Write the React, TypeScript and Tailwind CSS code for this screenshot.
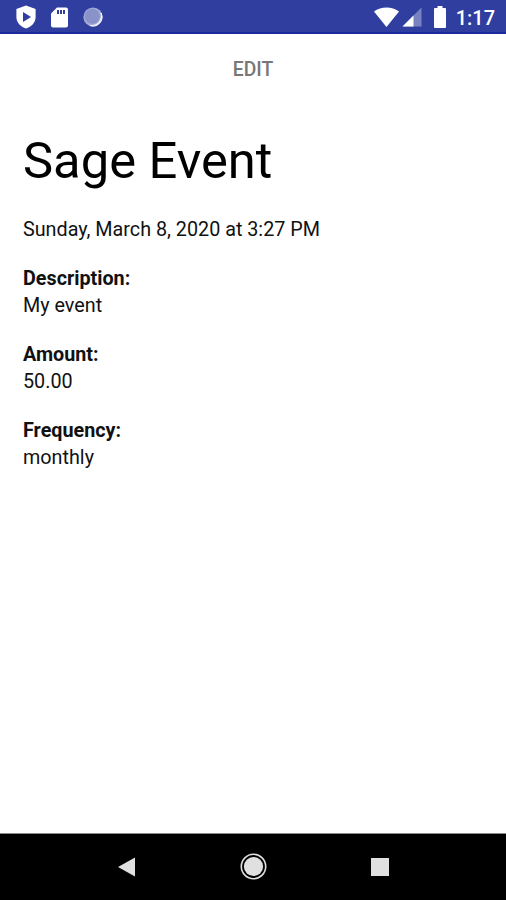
import React from "react";

const DETAILS = [
  { label: "Description:", value: "My event" },
  { label: "Amount:", value: "50.00" },
  { label: "Frequency:", value: "monthly" },
];

const StatusBar: React.FC = () => {
  return (
    <header className="flex h-[34px] shrink-0 items-center justify-between border-b-2 border-[#1d2a9c] bg-[#303f9f] pl-4 pr-[11px] pt-[2px] text-white">
      <div className="flex items-center">
        {/* Play Protect shield */}
        <svg className="h-[24px] w-[20px]" viewBox="0 0 20 24">
          <path d="M10 0.6 L19.6 4 V12 C19.6 17.5 15.5 21.8 10 23.4 C4.5 21.8 0.4 17.5 0.4 12 V4 Z" fill="#fff" />
          <path d="M7 7 L15 12 L7 17 Z" fill="#303f9f" />
        </svg>
        {/* SD card */}
        <svg className="ml-[15px] h-[21px] w-[17px]" viewBox="0 0 17 21">
          <path d="M6 0.5 H15 Q17 0.5 17 2.5 V18.5 Q17 20.5 15 20.5 H2 Q0 20.5 0 18.5 V6.5 Z" fill="#fff" />
          <path d="M6 3 H8 V7 H6 Z M9 3 H11 V7 H9 Z M12 3 H14 V7 H12 Z" fill="#303f9f" />
        </svg>
        {/* Sync spinner */}
        <svg className="ml-[15px] h-5 w-5" viewBox="0 0 20 20">
          <circle cx="10" cy="10" r="9.6" fill="#a3abd6" />
          <path d="M18 6 A9 9 0 0 1 7 18.5 A9.8 9.8 0 0 0 18 6 Z" fill="#f1f3fc" stroke="#f1f3fc" />
          <circle cx="9.3" cy="9.3" r="7.5" fill="#8992c9" />
        </svg>
      </div>
      <div className="flex items-center">
        <svg className="h-[20px] w-[25px]" viewBox="0 0 25 20">
          <path d="M0 4.5 C7 -1 18 -1 25 4.5 L12.5 20 Z" fill="#fff" />
        </svg>
        <svg className="ml-[3px] h-[20px] w-[20px]" viewBox="0 0 20 20">
          <path d="M19.5 0.5 V19.5 H0.5 Z" fill="#7882c1" />
          <path d="M11.5 8.5 V19.5 H0.5 Z" fill="#fff" />
        </svg>
        <svg className="ml-[12px] h-[22px] w-[12px]" viewBox="0 0 12 22">
          <path d="M3.5 0 H8.5 V2 H11 Q12 2 12 3 V21 Q12 22 11 22 H1 Q0 22 0 21 V3 Q0 2 1 2 H3.5 Z" fill="#fff" />
        </svg>
        <span className="ml-[10px] mt-px text-[20px] font-medium leading-none">1:17</span>
      </div>
    </header>
  );
};

const NavigationBar: React.FC = () => {
  return (
    <nav className="flex h-[67px] shrink-0 items-center justify-center gap-[99px] border-t border-[#8a8a8a] bg-black">
      <svg className="h-7 w-7" viewBox="0 0 28 28">
        <path d="M6 14 L23 4.5 V23.5 Z" fill="#e0e0e0" />
      </svg>
      <svg className="h-7 w-7" viewBox="0 0 28 28">
        <circle cx="14.5" cy="13.5" r="12.2" fill="none" stroke="#e0e0e0" strokeWidth="1.6" />
        <circle cx="14.5" cy="13.5" r="9.6" fill="#e0e0e0" />
      </svg>
      <svg className="h-7 w-7" viewBox="0 0 28 28">
        <rect x="5" y="5" width="18" height="18" fill="#e0e0e0" />
      </svg>
    </nav>
  );
};

const App: React.FC = () => {
  return (
    <div className="flex h-screen flex-col bg-white font-[Roboto,sans-serif] text-[#111]">
      <StatusBar />
      <main className="flex-1 px-[23px]">
        <div className="flex h-[68px] items-center justify-center">
          <button className="mt-1 text-[19.3px] font-medium leading-[20px] text-[#777]">EDIT</button>
        </div>
        <h1 className="mt-[29px] text-[50.7px] leading-[60px] text-black">Sage Event</h1>
        <p className="mt-[25px] text-[19.75px] leading-[27px]">Sunday, March 8, 2020 at 3:27 PM</p>
        {DETAILS.map((detail) => (
          <div key={detail.label} className="mt-[22px] text-[19.75px] leading-[27px]">
            <p className="font-bold">{detail.label}</p>
            <p>{detail.value}</p>
          </div>
        ))}
      </main>
      <NavigationBar />
    </div>
  );
};

export default App;
